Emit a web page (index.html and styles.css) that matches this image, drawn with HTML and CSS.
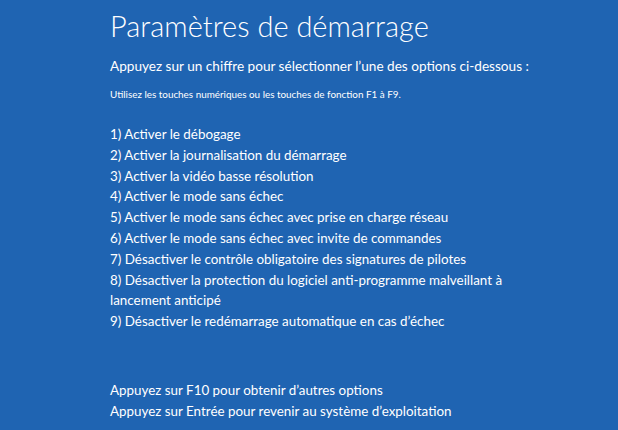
FILE: index.html
```html
<!DOCTYPE html>
<html lang="fr">
<head>
<meta charset="utf-8">
<link rel="stylesheet" href="styles.css">
</head>
<body>
<main class="screen">
  <h1 class="title">Paramètres de démarrage</h1>
  <p class="lead">Appuyez sur un chiffre pour sélectionner l’une des options ci-dessous :</p>
  <p class="hint">Utilisez les touches numériques ou les touches de fonction F1 à F9.</p>
  <ol class="options">
    <li>1) Activer le débogage</li>
    <li>2) Activer la journalisation du démarrage</li>
    <li>3) Activer la vidéo basse résolution</li>
    <li>4) Activer le mode sans échec</li>
    <li>5) Activer le mode sans échec avec prise en charge réseau</li>
    <li>6) Activer le mode sans échec avec invite de commandes</li>
    <li>7) Désactiver le contrôle obligatoire des signatures de pilotes</li>
    <li>8) Désactiver la protection du logiciel anti-programme malveillant à lancement anticipé</li>
    <li>9) Désactiver le redémarrage automatique en cas d’échec</li>
  </ol>
  <div class="footer">
    <p>Appuyez sur F10 pour obtenir d’autres options</p>
    <p>Appuyez sur Entrée pour revenir au système d’exploitation</p>
  </div>
</main>
</body>
</html>
```
FILE: styles.css
```css
html, body {
  margin: 0;
  padding: 0;
  background: #1f64b2;
  height: 100%;
  overflow: hidden;
}
.screen {
  color: #ffffff;
  font-family: Lato, "Noto Sans", sans-serif;
  padding: 6px 0 0 110px;
}
.title {
  margin: 0;
  font-size: 29px;
  font-weight: 300;
  line-height: 40px;
}
.lead {
  margin: 10px 0 0;
  font-size: 13.6px;
  line-height: 20px;
}
.hint {
  margin: 11px 0 0;
  font-size: 9.9px;
  line-height: 14px;
}
.options {
  list-style: none;
  margin: 23px 0 0;
  padding: 0;
  max-width: 394px;
  font-size: 13.4px;
  line-height: 20.8px;
}
.footer {
  margin-top: 48px;
  font-size: 13.4px;
  line-height: 20.8px;
}
.footer p { margin: 0; }
```
